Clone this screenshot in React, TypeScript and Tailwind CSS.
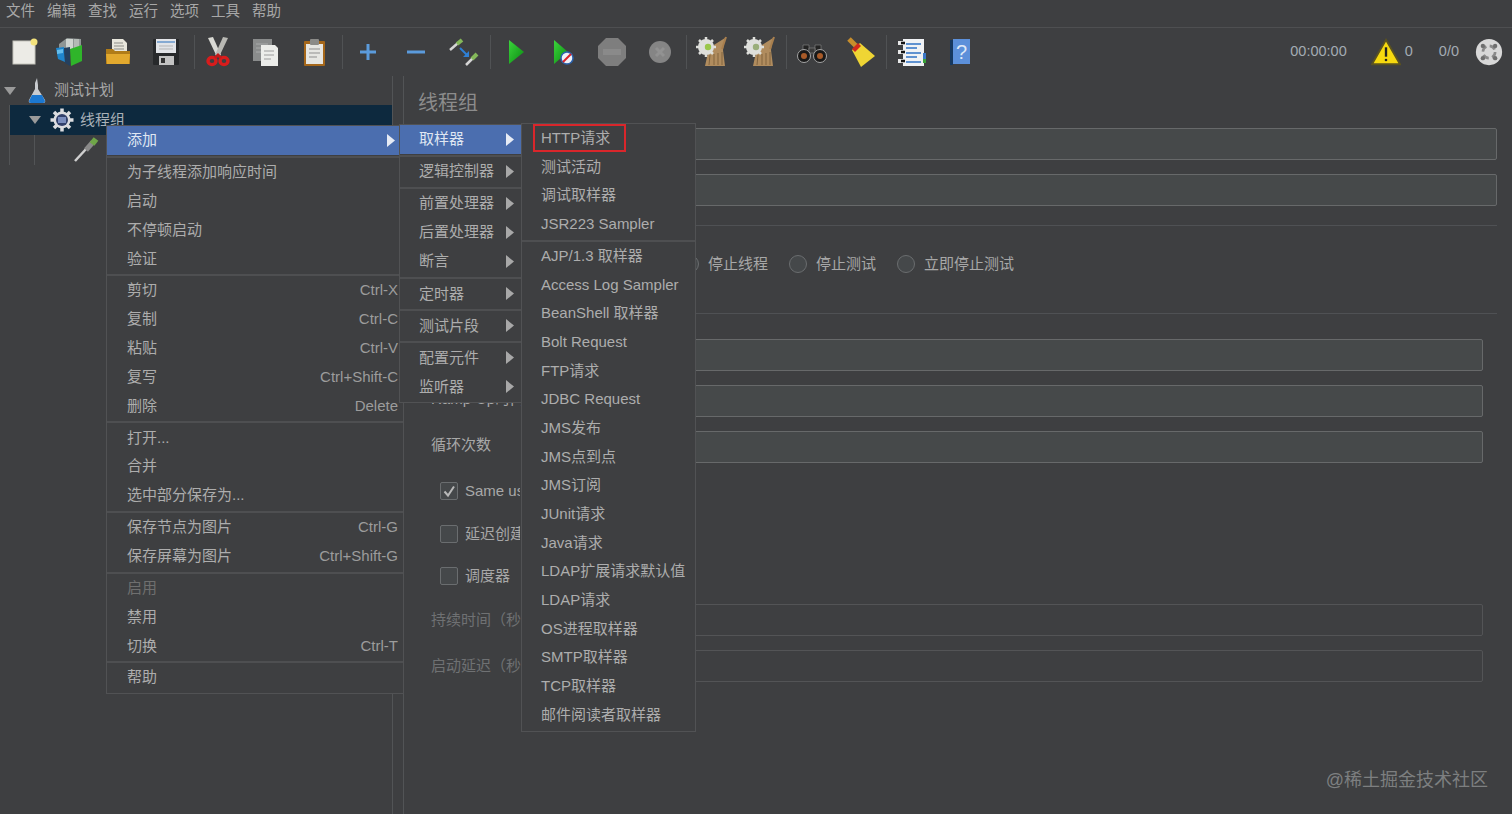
import React from 'react';

const FONT = "font-['Liberation_Sans','Noto_Sans_CJK_SC',sans-serif]";

type Row = { label: string; shortcut?: string; sub?: boolean; active?: boolean; disabled?: boolean };

const mainMenu: Row[][] = [
  [{ label: '添加', sub: true, active: true }],
  [{ label: '为子线程添加响应时间' }, { label: '启动' }, { label: '不停顿启动' }, { label: '验证' }],
  [
    { label: '剪切', shortcut: 'Ctrl-X' },
    { label: '复制', shortcut: 'Ctrl-C' },
    { label: '粘贴', shortcut: 'Ctrl-V' },
    { label: '复写', shortcut: 'Ctrl+Shift-C' },
    { label: '删除', shortcut: 'Delete' },
  ],
  [{ label: '打开...' }, { label: '合并' }, { label: '选中部分保存为...' }],
  [{ label: '保存节点为图片', shortcut: 'Ctrl-G' }, { label: '保存屏幕为图片', shortcut: 'Ctrl+Shift-G' }],
  [{ label: '启用', disabled: true }, { label: '禁用' }, { label: '切换', shortcut: 'Ctrl-T' }],
  [{ label: '帮助' }],
];

const addMenu: Row[][] = [
  [{ label: '取样器', sub: true, active: true }],
  [{ label: '逻辑控制器', sub: true }],
  [{ label: '前置处理器', sub: true }, { label: '后置处理器', sub: true }, { label: '断言', sub: true }],
  [{ label: '定时器', sub: true }],
  [{ label: '测试片段', sub: true }],
  [{ label: '配置元件', sub: true }, { label: '监听器', sub: true }],
];

const samplerMenu: Row[][] = [
  [{ label: 'HTTP请求' }, { label: '测试活动' }, { label: '调试取样器' }, { label: 'JSR223 Sampler' }],
  [
    'AJP/1.3 取样器', 'Access Log Sampler', 'BeanShell 取样器', 'Bolt Request', 'FTP请求', 'JDBC Request',
    'JMS发布', 'JMS点到点', 'JMS订阅', 'JUnit请求', 'Java请求', 'LDAP扩展请求默认值', 'LDAP请求',
    'OS进程取样器', 'SMTP取样器', 'TCP取样器', '邮件阅读者取样器',
  ].map((label) => ({ label })),
];

function Menu({ sections, className, rowClass }: { sections: Row[][]; className: string; rowClass: string }) {
  return (
    <div className={`absolute z-10 bg-[#3e3f41] border border-[#515254] text-[15px] text-[#adadad] ${className}`}>
      {sections.map((rows, i) => (
        <div key={i} className={i > 0 ? 'border-t-2 border-[#4e4f51] mt-px' : ''}>
          {rows.map((row) => (
            <div
              key={row.label}
              className={`${rowClass} flex items-center justify-between ${row.active ? 'bg-[#4b6eaf] text-[#dfe6f2]' : ''} ${row.disabled ? 'text-[#6f6f6f]' : ''}`}
            >
              <span className="whitespace-nowrap">{row.label}</span>
              {row.shortcut && <span className="text-[#9c9c9c] whitespace-nowrap">{row.shortcut}</span>}
              {row.sub && (
                <svg width="8" height="13" viewBox="0 0 8 13" className="mr-[3px]">
                  <path d="M0 0 L8 6.5 L0 13 Z" fill={row.active ? '#e6ebf5' : '#a8a8a8'} />
                </svg>
              )}
            </div>
          ))}
        </div>
      ))}
    </div>
  );
}

function Svg({ children, s = 32 }: { children: React.ReactNode; s?: number }) {
  return (
    <svg width={s} height={s} viewBox="0 0 32 32">
      {children}
    </svg>
  );
}

const NewIcon = () => (
  <Svg>
    <rect x="5" y="5" width="22" height="23" fill="#ecebe6" stroke="#c4c4bc" />
    <circle cx="26" cy="6" r="3.5" fill="#f3e27c" />
  </Svg>
);
const TemplatesIcon = () => (
  <Svg>
    <path d="M6 8 L14 2 L28 3 L28 12 L6 14Z" fill="#8f9695" />
    <path d="M13 3h7v10h-7z" fill="#cfd4d0" />
    <path d="M21 3h5v9h-5z" fill="#b4bab6" />
    <path d="M3 12 L11 11 L12 26 L5 23Z" fill="#1f86cc" />
    <path d="M11 12 L17 11 L17 30 L12 27Z" fill="#24405f" />
    <path d="M17 13 L29 9 L29 25 L18 30Z" fill="#2fb52a" />
    <path d="M4 14l6 -1v4l-6 1z" fill="#64bdec" />
  </Svg>
);
const OpenIcon = () => (
  <Svg>
    <path d="M10 3h11l4 4v9H10z" fill="#e8e6dc" />
    <path d="M12 7h9M12 10h10M12 13h10" stroke="#8d8d88" />
    <path d="M4 13h7l2 2h15v13H4z" fill="#b07c18" />
    <path d="M4 18h24l-1 10H5z" fill="#e2a92e" />
  </Svg>
);
const SaveIcon = () => (
  <Svg>
    <rect x="3" y="3" width="26" height="26" rx="1" fill="#27292b" />
    <rect x="6" y="3" width="20" height="14" fill="#e2e4e8" />
    <path d="M7 6h18" stroke="#86aad2" strokeWidth="2" />
    <path d="M9 10h14M9 13h14" stroke="#b5b5b5" />
    <rect x="9" y="20" width="15" height="9" fill="#c4c4c4" />
    <rect x="11" y="22" width="4" height="5" fill="#333" />
  </Svg>
);
const CutIcon = () => (
  <Svg>
    <path d="M6 2 L11 1 L19 19 L15 21Z" fill="#d9d9d4" />
    <path d="M26 2 L21 1 L13 19 L17 21Z" fill="#b9b9b4" />
    <ellipse cx="10" cy="25" rx="4" ry="3.6" fill="none" stroke="#d81c1c" strokeWidth="3.4" />
    <ellipse cx="22" cy="25" rx="4" ry="3.6" fill="none" stroke="#d81c1c" strokeWidth="3.4" />
    <path d="M13 22l3-3 3 3" stroke="#c31818" strokeWidth="3" fill="none" />
  </Svg>
);
const CopyIcon = () => (
  <Svg>
    <rect x="3" y="3" width="19" height="22" fill="#8a8c8c" />
    <path d="M6 8h12M6 12h12M6 16h12" stroke="#a9abab" />
    <path d="M11 9h14l3 3v18H11z" fill="#ecedea" />
    <path d="M14 15h10M14 19h10M14 23h7" stroke="#9c9c9c" />
  </Svg>
);
const PasteIcon = () => (
  <Svg>
    <rect x="6" y="5" width="21" height="25" rx="1" fill="#a5671a" />
    <rect x="8" y="8" width="17" height="20" fill="#e6e6e2" />
    <rect x="12" y="3" width="9" height="6" rx="1" fill="#8b8b88" />
    <path d="M11 13h11M11 17h11M11 21h8" stroke="#8f8f8f" />
  </Svg>
);
const PlusIcon = () => (
  <Svg>
    <path d="M16 8v16M8 16h16" stroke="#5b9bdc" strokeWidth="3" />
  </Svg>
);
const MinusIcon = () => (
  <Svg>
    <path d="M7 16h18" stroke="#5b9bdc" strokeWidth="3" />
  </Svg>
);
const ToggleIcon = () => (
  <Svg>
    <path d="M2 14 L10 7" stroke="#d5d5d5" strokeWidth="2.5" />
    <path d="M9 8 L14 4" stroke="#84b85a" strokeWidth="4" />
    <path d="M18 29 L25 22" stroke="#d5d5d5" strokeWidth="2.5" />
    <path d="M24 23 L29 18" stroke="#84b85a" strokeWidth="4" />
    <path d="M12 12 L19 19" stroke="#2f7fd3" strokeWidth="2" />
    <path d="M15 21h6v-6z" fill="#2f7fd3" />
  </Svg>
);
const PlayIcon = ({ noTimer }: { noTimer?: boolean }) => (
  <Svg>
    <defs>
      <linearGradient id="pg" x1="0" x2="1" y1="0" y2="1">
        <stop offset="0" stopColor="#3bd53b" />
        <stop offset="1" stopColor="#0a8a12" />
      </linearGradient>
    </defs>
    {noTimer ? (
      <>
        <path d="M6 4 L20 16 L6 28Z" fill="url(#pg)" />
        <circle cx="19" cy="22" r="6" fill="#eef2f8" stroke="#2b62ad" strokeWidth="1.5" />
        <path d="M15 26 L23 18" stroke="#d8232a" strokeWidth="2" />
      </>
    ) : (
      <path d="M9 4 L24 16 L9 28Z" fill="url(#pg)" />
    )}
  </Svg>
);
const StopIcon = () => (
  <Svg>
    <path d="M10 2h12l8 8v12l-8 8H10l-8-8V10z" fill="#7e7e7e" />
    <path d="M7 13h18v6H7z" fill="#8a8a8a" />
  </Svg>
);
const ShutdownIcon = () => (
  <Svg>
    <circle cx="16" cy="16" r="11" fill="#858585" />
    <path d="M12 12l8 8M20 12l-8 8" stroke="#929292" strokeWidth="3" />
  </Svg>
);
const ClearIcon = ({ all }: { all?: boolean }) => (
  <Svg>
    <path d="M13 12 L29 2 L27 14 L29 30 L9 30Z" fill="#b08c5e" />
    <path d="M14 19l-1 10M18 18l0 11M22 17l0 12M26 16l0 13" stroke="#82643f" />
    <path d="M30 1 L26 13" stroke="#a87f4e" strokeWidth="2" />
    <circle cx="10" cy="11" r="8" fill="#dedfdb" />
    <path d="M10 1v20M0 11h20M3 4l14 14M17 4L3 18" stroke="#dedfdb" strokeWidth="2.5" />
    <circle cx="12" cy="11" r="3.2" fill={all ? '#9aae7a' : '#9ac74a'} />
  </Svg>
);
const FindIcon = () => (
  <Svg>
    <path d="M7 9h6v8H7zM19 9h6v8h-6z" fill="#232323" stroke="#8a8a8a" strokeWidth="0.6" />
    <path d="M13 12h6v5h-6z" fill="#3a3a3a" stroke="#8a8a8a" strokeWidth="0.6" />
    <circle cx="8" cy="20" r="6.5" fill="#191919" stroke="#a5a5a5" />
    <circle cx="24" cy="20" r="6.5" fill="#191919" stroke="#a5a5a5" />
    <circle cx="8" cy="20" r="3" fill="#a85a28" />
    <circle cx="24" cy="20" r="3" fill="#a85a28" />
  </Svg>
);
const BroomIcon = () => (
  <Svg>
    <path d="M5 3 L12 10" stroke="#c78e2c" strokeWidth="5" />
    <path d="M8 14 L16 7 L31 20 L17 31Z" fill="#efd534" />
    <path d="M8 13 L14 7 L17 10 L11 16Z" fill="#d12a1c" />
  </Svg>
);
const ListIcon = () => (
  <Svg>
    <rect x="7" y="3" width="21" height="27" fill="#f0f2f4" />
    <path d="M10 8h15M10 12h11M10 17h15M10 21h11M10 26h15" stroke="#2f73c4" strokeWidth="1.5" />
    <path d="M2 7h7M2 16h7M2 25h7" stroke="#e8e8e8" strokeWidth="4" />
    <path d="M5 7h4M5 16h4M5 25h4" stroke="#151515" strokeWidth="2.5" />
    <path d="M27 17h3v6h-3z" fill="#3b78c8" />
    <path d="M27 23h3v4h-3z" fill="#3aa33a" />
  </Svg>
);
const HelpIcon = () => (
  <Svg>
    <path d="M6 4h3v25H6z" fill="#16385f" />
    <path d="M9 3h17v25H9z" fill="#5c90da" />
    <text x="17.5" y="23" textAnchor="middle" fontSize="20" fill="#dfe9f7" fontFamily="Liberation Sans">?</text>
  </Svg>
);
const WarnIcon = () => (
  <Svg s={30}>
    <path d="M16 3 L31 29 H1Z" fill="#f6d90f" stroke="#5a5220" strokeWidth="2" />
    <path d="M16 11v10" stroke="#222" strokeWidth="2.5" />
    <circle cx="16" cy="24.5" r="1.4" fill="#222" />
  </Svg>
);
const GlobeIcon = () => (
  <Svg s={28}>
    <circle cx="16" cy="16" r="15" fill="#d8d8d8" />
    <circle cx="16" cy="16" r="7" fill="none" stroke="#8a8a8a" strokeWidth="3" strokeDasharray="7 4" />
    <circle cx="9" cy="9" r="2.5" fill="#6e6e6e" />
    <circle cx="23" cy="9" r="2.5" fill="#6e6e6e" />
    <circle cx="9" cy="23" r="2.5" fill="#6e6e6e" />
    <circle cx="23" cy="23" r="2.5" fill="#6e6e6e" />
  </Svg>
);
const FlaskIcon = () => (
  <svg width="20" height="26" viewBox="0 0 20 26">
    <path d="M10 0 L11 7 V11 L18 22 Q19 25 16 25 H4 Q1 25 2 22 L8 11 V5Z" fill="#c9ccd0" />
    <path d="M5 17 H15 L18 23 Q18 25 16 25 H4 Q2 25 2 23Z" fill="#1c78d0" />
  </svg>
);
const GearIcon = () => (
  <svg width="24" height="24" viewBox="0 0 24 24">
    <circle cx="12" cy="12" r="8.5" fill="#dcdde0" />
    <path d="M12 0.5v23M0.5 12h23M4 4l16 16M20 4L4 20" stroke="#dcdde0" strokeWidth="3.5" />
    <circle cx="12" cy="12" r="6" fill="#31406a" />
    <rect x="8" y="9" width="8" height="6" fill="#7a8dbd" />
  </svg>
);
const PipetteIcon = () => (
  <svg width="26" height="26" viewBox="0 0 26 26">
    <path d="M1 24 L13 11" stroke="#cfcfcf" strokeWidth="2.5" />
    <path d="M12 13 L19 5" stroke="#8a8a8a" strokeWidth="5" />
    <path d="M18 7 L22 2" stroke="#6fa648" strokeWidth="6" />
  </svg>
);

const Sep = () => <div className="w-[4px] h-[34px] flex justify-center"><div className="w-px h-full bg-[#505254]" /></div>;
const Tool = ({ children, className = '' }: { children: React.ReactNode; className?: string }) => (
  <div className={`w-[48px] h-[48px] flex items-center justify-center shrink-0 ${className}`}>{children}</div>
);

function Field({ className = '', disabled }: { className?: string; disabled?: boolean }) {
  return (
    <div
      className={`h-[32px] border rounded-[2px] ${disabled ? 'border-[#535456] bg-[#3e3f41]' : 'border-[#67696a] bg-[#46494a]'} ${className}`}
    />
  );
}

function Radio({ label }: { label: string }) {
  return (
    <div className="flex items-center gap-[9px]">
      <div className="w-[18px] h-[18px] rounded-full border border-[#6a6d6f] bg-[#45484a]" />
      <span>{label}</span>
    </div>
  );
}

function Check({ label, checked }: { label: string; checked?: boolean }) {
  return (
    <div className="h-[24px] w-[102px] overflow-hidden flex items-center gap-[7px] pl-[22px] whitespace-nowrap">
      <div className="w-[18px] h-[18px] shrink-0 rounded-[2px] border border-[#6a6d6f] bg-[#45484a] flex items-center justify-center">
        {checked && (
          <svg width="14" height="14" viewBox="0 0 14 14">
            <path d="M2.5 7.5 L6 11.5 L12 2.5" stroke="#b8b8b8" strokeWidth="2" fill="none" />
          </svg>
        )}
      </div>
      <span>{label}</span>
    </div>
  );
}

export default function App() {
  return (
    <div className={`relative w-[1512px] h-[814px] overflow-hidden bg-[#3e3f41] text-[#a8a8a8] text-[15px] ${FONT}`}>
      {/* menu bar */}
      <div className="h-[28px] flex items-center gap-[12px] pl-[6px] pb-[3px] border-b border-[#4e4f51] text-[14.5px] text-[#a8a8a8]">
        {['文件', '编辑', '查找', '运行', '选项', '工具', '帮助'].map((m) => (
          <span key={m}>{m}</span>
        ))}
      </div>

      {/* toolbar */}
      <div className="h-[48px] flex items-center">
        <Tool><NewIcon /></Tool>
        <Tool className="-translate-x-[3px]"><TemplatesIcon /></Tool>
        <Tool className="-translate-x-[2px]"><OpenIcon /></Tool>
        <Tool className="-translate-x-[2px]"><SaveIcon /></Tool>
        <Sep />
        <Tool className="-translate-x-[2px]"><CutIcon /></Tool>
        <Tool className="-translate-x-[2px]"><CopyIcon /></Tool>
        <Tool className="-translate-x-[2px]"><PasteIcon /></Tool>
        <Sep />
        <Tool><PlusIcon /></Tool>
        <Tool><MinusIcon /></Tool>
        <Tool><ToggleIcon /></Tool>
        <Sep />
        <Tool><PlayIcon /></Tool>
        <Tool><PlayIcon noTimer /></Tool>
        <Tool><StopIcon /></Tool>
        <Tool><ShutdownIcon /></Tool>
        <Sep />
        <Tool><ClearIcon /></Tool>
        <Tool><ClearIcon all /></Tool>
        <Sep />
        <Tool><FindIcon /></Tool>
        <Tool><BroomIcon /></Tool>
        <Sep />
        <Tool><ListIcon /></Tool>
        <Tool><HelpIcon /></Tool>
        <div className="ml-auto flex items-center text-[14.5px] text-[#a3abb3] pr-[9px]">
          <span>00:00:00</span>
          <span className="ml-[24px]"><WarnIcon /></span>
          <span className="ml-[4px]">0</span>
          <span className="ml-[26px]">0/0</span>
          <span className="ml-[16px]"><GlobeIcon /></span>
        </div>
      </div>

      {/* main split */}
      <div className="flex h-[738px]">
        {/* tree */}
        <div className="relative w-[393px] shrink-0 border-r border-[#525456]">
          <div className="h-[29px] flex items-center pl-[4px] gap-[8px] text-[#a8a8a8]">
            <svg width="12" height="8" viewBox="0 0 12 8"><path d="M0 0h12L6 8z" fill="#9a9a9a" /></svg>
            <span className="ml-[3px]"><FlaskIcon /></span>
            <span className="ml-[-1px]">测试计划</span>
          </div>
          <div className="h-[30px] ml-[10px] bg-[#0d293e] flex items-center pl-[19px] text-[#a9b1b8]">
            <svg width="12" height="8" viewBox="0 0 12 8"><path d="M0 0h12L6 8z" fill="#9a9a9a" /></svg>
            <span className="ml-[9px]"><GearIcon /></span>
            <span className="ml-[6px]">线程组</span>
          </div>
          <div className="h-[30px] flex items-center pl-[74px]">
            <PipetteIcon />
          </div>
          <div className="absolute left-[9px] top-[29px] w-px h-[60px] bg-[#525456]" />
          <div className="absolute left-[34px] top-[59px] w-px h-[30px] bg-[#525456]" />
        </div>
        <div className="w-[10px] shrink-0" />

        {/* thread group panel */}
        <div className="flex-1 border-l border-[#525456] pl-[14px] pr-[15px] pt-[13px]">
          <h1 className="text-[20px] leading-[28px] text-[#8c8c8c]">线程组</h1>
          <div className="mt-[11px]">
            <Field className="ml-[60px]" />
            <Field className="ml-[60px] mt-[14px]" />
          </div>
          <div className="mt-[19px] border-t border-[#4f5154] pt-[27px] pl-[13px] h-[88px] flex items-start">
            <div className="ml-[250px] flex gap-[21px]">
              <Radio label="停止线程" />
              <Radio label="停止测试" />
              <Radio label="立即停止测试" />
            </div>
          </div>
          <div className="border-t border-[#4f5154] pr-[14px] pt-[25px]">
            <Field className="ml-[110px]" />
            <div className="relative mt-[14px] flex items-center">
              <span className="absolute left-[13px] top-[3px] w-[90px] overflow-hidden whitespace-nowrap">Ramp-Up时间（秒）</span>
              <Field className="ml-[110px] flex-1" />
            </div>
            <div className="relative mt-[14px] flex items-center">
              <span className="absolute left-[13px] top-[3px]">循环次数</span>
              <Field className="ml-[110px] flex-1" />
            </div>
            <div className="mt-[16px]">
              <Check label="Same user on each iteration" checked />
              <div className="mt-[19px]"><Check label="延迟创建线程直到需要" /></div>
              <div className="mt-[18px]"><Check label="调度器" /></div>
            </div>
            <div className="relative mt-[16px] flex items-center text-[#6f7173]">
              <span className="absolute left-[13px] w-[90px] overflow-hidden whitespace-nowrap">持续时间（秒）</span>
              <Field className="ml-[110px] flex-1" disabled />
            </div>
            <div className="relative mt-[14px] flex items-center text-[#6f7173]">
              <span className="absolute left-[13px] w-[90px] overflow-hidden whitespace-nowrap">启动延迟（秒）</span>
              <Field className="ml-[110px] flex-1" disabled />
            </div>
          </div>
        </div>
      </div>

      {/* context menus */}
      <Menu sections={mainMenu} className="left-[106px] top-[125px] w-[298px] pb-[1px]" rowClass="h-[28.85px] pl-[20px] pr-[5px]" />
      <Menu sections={addMenu} className="left-[399px] top-[124px] w-[123px] pb-[1px]" rowClass="h-[29.05px] pl-[19px] pr-[4px]" />
      <Menu sections={samplerMenu} className="left-[521px] top-[123px] w-[175px] pb-[2px]" rowClass="h-[28.7px] pl-[19px]" />
      <div className="absolute z-20 left-[533px] top-[124px] w-[93px] h-[28px] border-2 border-[#d9262b]" />

      <div className="absolute right-[24px] bottom-[20px] text-[18px] text-[#7d7f80]">@稀土掘金技术社区</div>
    </div>
  );
}
